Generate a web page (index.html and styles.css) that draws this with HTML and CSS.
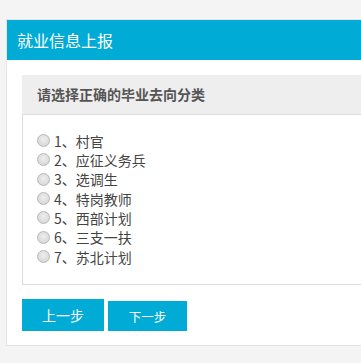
FILE: index.html
```html
<!DOCTYPE html>
<html lang="zh">
<head>
<meta charset="utf-8">
<link rel="stylesheet" href="styles.css">
</head>
<body>
<div class="card">
  <div class="card-head">就业信息上报</div>
  <div class="card-body">
    <div class="panel">
      <div class="panel-head">请选择正确的毕业去向分类</div>
      <div class="panel-body">
        <label class="opt"><span class="radio"></span>1、村官</label>
        <label class="opt"><span class="radio"></span>2、应征义务兵</label>
        <label class="opt"><span class="radio"></span>3、选调生</label>
        <label class="opt"><span class="radio"></span>4、特岗教师</label>
        <label class="opt"><span class="radio"></span>5、西部计划</label>
        <label class="opt"><span class="radio"></span>6、三支一扶</label>
        <label class="opt"><span class="radio"></span>7、苏北计划</label>
      </div>
    </div>
    <div class="actions">
      <button class="btn btn-prev">上一步</button>
      <button class="btn btn-next">下一步</button>
    </div>
  </div>
</div>
</body>
</html>
```
FILE: styles.css
```css
html, body {
  margin: 0;
  padding: 0;
  background: #f4f4f4;
  overflow: hidden;
  font-family: "Noto Sans CJK SC", "Noto Sans", sans-serif;
}
.card {
  margin: 19px 0 0 6px;
  background: #fff;
  border: 1px solid #e4e4e4;
  border-right: none;
}
.card-head {
  height: 40px;
  line-height: 40px;
  background: #00abd6;
  color: #fff;
  font-size: 16px;
  padding-left: 10px;
}
.card-body {
  padding: 15px 0 14px 15px;
}
.panel-head {
  height: 39px;
  line-height: 39px;
  background: #eeeeee;
  border-bottom: 1px solid #dddddd;
  color: #555;
  font-size: 14px;
  font-weight: bold;
  padding-left: 15px;
}
.panel-body {
  border: 1px solid #dddddd;
  border-top: none;
  border-right: none;
  padding: 16px 14px 18px 14px;
  display: flex;
  flex-direction: column;
}
.opt {
  display: flex;
  align-items: center;
  height: 19.33px;
  font-size: 14px;
  color: #444;
}
.radio {
  width: 11px;
  height: 11px;
  border-radius: 50%;
  border: 1px solid #b8b8b8;
  background: radial-gradient(circle at 50% 40%, #eeeeee 0%, #dadada 70%, #cfcfcf 100%);
  margin-right: 4px;
}
.actions {
  margin-top: 14px;
  display: flex;
  align-items: flex-end;
  gap: 4px;
}
.btn {
  border: none;
  background: #00abd6;
  color: #fff;
  font-family: inherit;
  padding: 0;
}
.btn-prev {
  width: 82px;
  height: 32px;
  font-size: 14px;
}
.btn-next {
  width: 79px;
  height: 30px;
  font-size: 12.5px;
}
```
